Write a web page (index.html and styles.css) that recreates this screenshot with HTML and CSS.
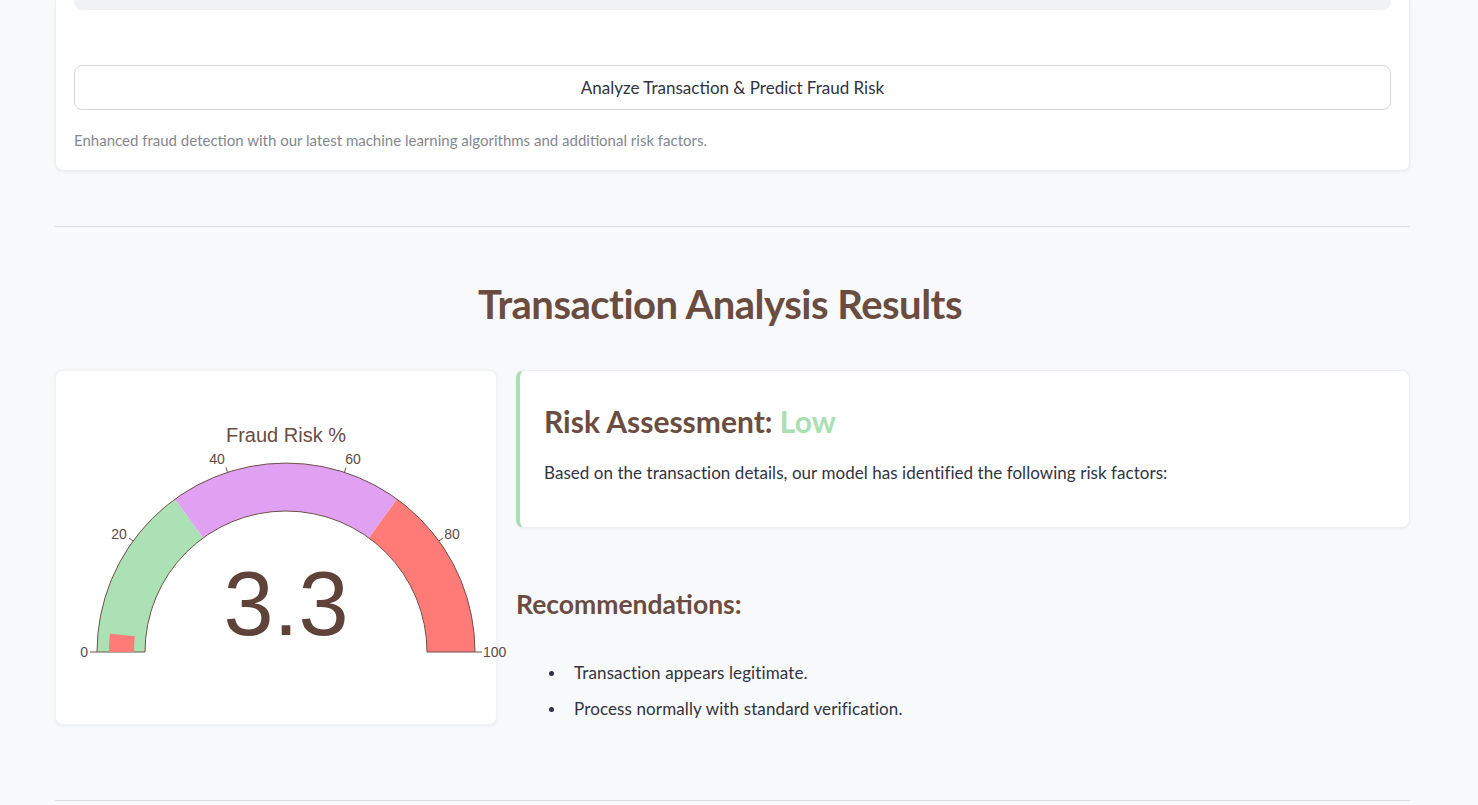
FILE: index.html
```html
<!DOCTYPE html>
<html lang="en">
<head>
<meta charset="utf-8">
<title>Fraud Detection</title>
<link rel="stylesheet" href="styles.css">
</head>
<body>
<main class="page">
  <section class="form-card">
    <div class="input-tail"></div>
    <button class="analyze-btn" type="button">Analyze Transaction &amp; Predict Fraud Risk</button>
    <p class="caption">Enhanced fraud detection with our latest machine learning algorithms and additional risk factors.</p>
  </section>

  <hr class="divider divider-top">

  <h1 class="results-title">Transaction Analysis Results</h1>

  <div class="results">
    <div class="gauge-card">
      <svg class="gauge" width="442" height="354" viewBox="0 0 442 354" xmlns="http://www.w3.org/2000/svg">
        <text class="g-title" x="231" y="72" text-anchor="middle">Fraud Risk %</text>
        <!-- steps -->
        <path d="M42 282 A189 189 0 0 1 119.91 129.1 L148.12 167.93 A141 141 0 0 0 90 282 Z" fill="#abe1b4"/>
        <path d="M119.91 129.1 A189 189 0 0 1 342.09 129.1 L313.88 167.93 A141 141 0 0 0 148.12 167.93 Z" fill="#e1a1f2"/>
        <path d="M342.09 129.1 A189 189 0 0 1 420 282 L372 282 A141 141 0 0 0 313.88 167.93 Z" fill="#ff7b78"/>
        <!-- outline -->
        <path d="M42 282 A189 189 0 0 1 420 282 L372 282 A141 141 0 0 0 90 282 Z" fill="none" stroke="#6d5148" stroke-width="1"/>
        <!-- value bar -->
        <path d="M54 282 A177 177 0 0 1 54.95 263.68 L79.82 266.27 A152 152 0 0 0 79 282 Z" fill="#ff7b78"/>
        <!-- ticks -->
        <g stroke="#6d5148" stroke-width="1">
          <line x1="42" y1="282" x2="35" y2="282"/>
          <line x1="78.1" y1="170.9" x2="74.0" y2="168.0"/>
          <line x1="172.6" y1="102.3" x2="171.0" y2="97.5"/>
          <line x1="289.4" y1="102.3" x2="291.0" y2="97.5"/>
          <line x1="383.9" y1="170.9" x2="388.0" y2="168.0"/>
          <line x1="420" y1="282" x2="427" y2="282"/>
        </g>
        <g class="g-tick">
          <text x="33" y="287" text-anchor="end">0</text>
          <text x="64" y="169" text-anchor="middle">20</text>
          <text x="162" y="94" text-anchor="middle">40</text>
          <text x="298" y="94" text-anchor="middle">60</text>
          <text x="397" y="169" text-anchor="middle">80</text>
          <text x="428" y="287" text-anchor="start">100</text>
        </g>
        <text class="g-value" x="231" y="265" text-anchor="middle">3.3</text>
      </svg>
    </div>

    <div class="details">
      <div class="risk-card">
        <h3 class="risk-title">Risk Assessment: <span class="risk-low">Low</span></h3>
        <p class="risk-text">Based on the transaction details, our model has identified the following risk factors:</p>
      </div>

      <h3 class="rec-title">Recommendations:</h3>
      <ul class="rec-list">
        <li>Transaction appears legitimate.</li>
        <li>Process normally with standard verification.</li>
      </ul>
    </div>
  </div>

  <hr class="divider divider-bottom">
</main>
</body>
</html>
```

FILE: styles.css
```css
* { box-sizing: border-box; }

html, body {
  margin: 0;
  padding: 0;
  background: #f8f9fb;
  overflow: hidden;
}

body {
  font-family: "Lato", "Noto Sans", sans-serif;
  color: #31333f;
  height: 805px;
}

.page {
  width: 1355px;
  margin-left: 55px;
}

.form-card {
  background: #ffffff;
  border: 1px solid #eceef1;
  border-top: none;
  border-radius: 0 0 8px 8px;
  box-shadow: 0 1px 3px rgba(0, 0, 0, 0.06);
  padding: 0 18px 18px;
  height: 171px;
}

.input-tail {
  height: 10px;
  background: #f0f2f6;
  border-radius: 0 0 8px 8px;
}

.analyze-btn {
  display: block;
  width: 100%;
  height: 45px;
  margin-top: 55px;
  background: #ffffff;
  border: 1px solid #d5d6da;
  border-radius: 8px;
  font-family: inherit;
  font-size: 17px;
  color: #31333f;
  letter-spacing: 0;
}

.caption {
  margin: 19px 0 0;
  font-size: 15px;
  line-height: 22px;
  color: #85878f;
  letter-spacing: 0;
}

.divider {
  border: none;
  border-top: 1px solid #d9dce1;
  margin: 0;
}

.divider-top {
  margin-top: 55px;
}

.results-title {
  margin: 53px 0 0;
  padding-right: 25px;
  text-align: center;
  font-size: 40px;
  line-height: 48px;
  font-weight: 700;
  color: #6b4c40;
  letter-spacing: -0.5px;
}

.results {
  display: grid;
  grid-template-columns: 442px 1fr;
  gap: 19px;
  margin-top: 42px;
  align-items: start;
}

.gauge-card {
  background: #ffffff;
  height: 355px;
  border-radius: 8px;
  box-shadow: 0 1px 3px rgba(0, 0, 0, 0.07);
  border: 1px solid #f1f2f4;
  overflow: visible;
}

.gauge {
  display: block;
  margin: -1px 0 0 -1px;
  overflow: visible;
}

.g-title {
  font-family: "Liberation Sans", Arial, sans-serif;
  font-size: 20px;
  fill: #6b4c40;
}

.g-tick text {
  font-family: "Liberation Sans", Arial, sans-serif;
  font-size: 14px;
  fill: #5d4a42;
}

.g-value {
  font-family: "Liberation Sans", Arial, sans-serif;
  font-size: 90px;
  fill: #5f4339;
}

.risk-card {
  background: #ffffff;
  border: 1px solid #eceef1;
  border-left: 4px solid #a9e0b3;
  border-radius: 8px;
  box-shadow: 0 1px 3px rgba(0, 0, 0, 0.05);
  padding: 32px 24px 0;
  height: 158px;
}

.risk-title {
  margin: 0;
  font-size: 30px;
  line-height: 36px;
  font-weight: 700;
  color: #6b4c40;
  letter-spacing: 0;
}

.risk-low {
  color: #a9e0b3;
}

.risk-text {
  margin: 22px 0 0;
  font-size: 17px;
  line-height: 24px;
  letter-spacing: 0.05px;
}

.rec-title {
  margin: 59px 0 0;
  font-size: 26.5px;
  line-height: 34px;
  font-weight: 700;
  color: #6b4c40;
  letter-spacing: 0;
}

.rec-list {
  list-style: none;
  margin: 40px 0 0;
  padding-left: 33px;
  font-size: 17px;
  line-height: 24px;
  letter-spacing: 0.12px;
}

.rec-list li {
  display: flex;
  align-items: center;
  margin-bottom: 12px;
}

.rec-list li::before {
  content: "";
  flex: none;
  width: 5px;
  height: 5px;
  border-radius: 50%;
  background: #31333f;
  margin-right: 20px;
  margin-top: 1px;
}

.rec-list li:last-child {
  margin-bottom: 0;
}

.divider-bottom {
  margin-top: 75px;
}
```
